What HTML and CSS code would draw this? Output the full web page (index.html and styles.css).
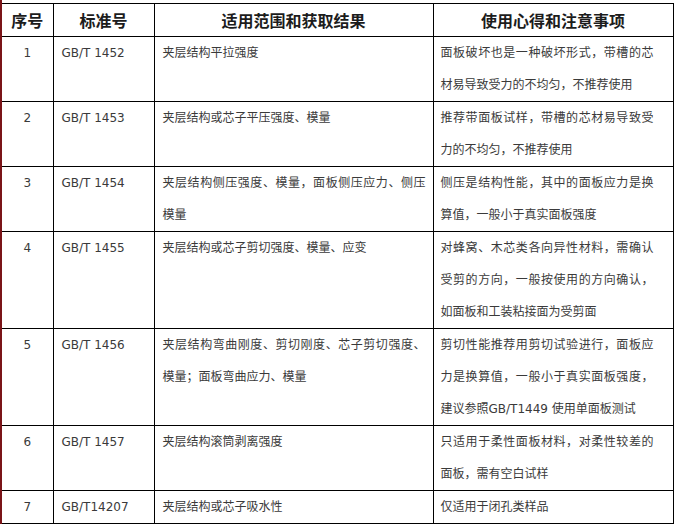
FILE: index.html
```html
<!DOCTYPE html>
<html lang="zh-CN">
<head>
<meta charset="utf-8">
<title>夹层结构试验标准</title>
<link rel="stylesheet" href="styles.css">
</head>
<body>
<div class="wrap">
<table class="std">
<colgroup>
<col class="c1"><col class="c2"><col class="c3"><col class="c4">
</colgroup>
<thead>
<tr><th>序号</th><th>标准号</th><th>适用范围和获取结果</th><th>使用心得和注意事项</th></tr>
</thead>
<tbody>
<tr><td class="num">1</td><td class="code">GB/T 1452</td><td class="txt">夹层结构平拉强度</td><td class="note">面板破坏也是一种破坏形式，带槽的芯材易导致受力的不均匀，不推荐使用</td></tr>
<tr><td class="num">2</td><td class="code">GB/T 1453</td><td class="txt">夹层结构或芯子平压强度、模量</td><td class="note">推荐带面板试样，带槽的芯材易导致受力的不均匀，不推荐使用</td></tr>
<tr><td class="num">3</td><td class="code">GB/T 1454</td><td class="txt">夹层结构侧压强度、模量，面板侧压应力、侧压模量</td><td class="note">侧压是结构性能，其中的面板应力是换算值，一般小于真实面板强度</td></tr>
<tr><td class="num">4</td><td class="code">GB/T 1455</td><td class="txt">夹层结构或芯子剪切强度、模量、应变</td><td class="note">对蜂窝、木芯类各向异性材料，需确认受剪的方向，一般按使用的方向确认，如面板和工装粘接面为受剪面</td></tr>
<tr><td class="num">5</td><td class="code">GB/T 1456</td><td class="txt">夹层结构弯曲刚度、剪切刚度、芯子剪切强度、模量；面板弯曲应力、模量</td><td class="note">剪切性能推荐用剪切试验进行，面板应力是换算值，一般小于真实面板强度，建议参照GB/T1449 使用单面板测试</td></tr>
<tr><td class="num">6</td><td class="code">GB/T 1457</td><td class="txt">夹层结构滚筒剥离强度</td><td class="note">只适用于柔性面板材料，对柔性较差的面板，需有空白试样</td></tr>
<tr><td class="num">7</td><td class="code">GB/T14207</td><td class="txt">夹层结构或芯子吸水性</td><td class="note">仅适用于闭孔类样品</td></tr>
</tbody>
</table>
</div>
</body>
</html>
```
FILE: styles.css
```css
html, body {
  margin: 0;
  padding: 0;
  background: #ffffff;
}
.wrap {
  border-left: 2px solid #7a1418;
  padding-top: 3px;
  width: 672px;
}
.std {
  border-collapse: collapse;
  table-layout: fixed;
  width: 671px;
  font-family: "DejaVu Sans", "Noto Sans CJK SC", sans-serif;
  font-size: 12px;
  color: #3a3a3a;
  text-spacing-trim: space-all;
}
.c1 { width: 51px; }
.c2 { width: 101px; }
.c3 { width: 279px; }
.c4 { width: 240px; }
.std th, .std td {
  border: 1px solid #000;
  padding: 0;
  vertical-align: top;
}
.std tr > :first-child {
  border-left: none;
}
.std th {
  font-family: "Noto Sans CJK SC", sans-serif;
  font-size: 16px;
  font-weight: bold;
  color: #1c1c1c;
  line-height: 32px;
  text-align: center;
  vertical-align: middle;
}
.std td {
  line-height: 32px;
}
.num {
  text-align: center;
}
.code {
  padding-left: 8px !important;
}
.txt {
  padding-left: 8px !important;
  padding-right: 7px !important;
  text-align: justify;
}
.note {
  padding-left: 7px !important;
  padding-right: 19px !important;
  text-align: justify;
}
```
